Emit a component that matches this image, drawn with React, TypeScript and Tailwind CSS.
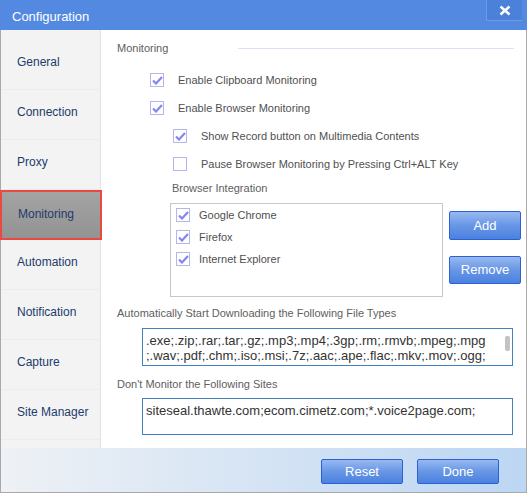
import React from 'react';

const font = { fontFamily: '"Liberation Sans", Arial, sans-serif' };

const Check = ({ checked }: { checked: boolean }) => (
  <span className="w-[14px] h-[14px] shrink-0 border border-[#b6b6ef] bg-white flex items-center justify-center">
    {checked && (
      <svg width="11" height="9" viewBox="0 0 11 9">
        <path d="M1 4.5 L4 7.5 L10 1" stroke="#8585ef" strokeWidth="2.2" fill="none" />
      </svg>
    )}
  </span>
);

const Btn = ({ label, className = '' }: { label: string; className?: string }) => (
  <div
    className={
      'flex items-center justify-center rounded-[2px] border border-[#2d5fd5] bg-linear-to-b from-[#97b9ef] via-[#6896e6] to-[#4a82df] text-white text-[13px] ' +
      className
    }
  >
    {label}
  </div>
);

const navItems = ['General', 'Connection', 'Proxy', 'Monitoring', 'Automation', 'Notification', 'Capture', 'Site Manager'];

const checks = [
  { label: 'Enable Clipboard Monitoring', checked: true, indent: 'pl-[33px]' },
  { label: 'Enable Browser Monitoring', checked: true, indent: 'pl-[33px]' },
  { label: 'Show Record button on Multimedia Contents', checked: true, indent: 'pl-[56px]' },
  { label: 'Pause Browser Monitoring by Pressing Ctrl+ALT Key', checked: false, indent: 'pl-[56px]' },
];

const browsers = ['Google Chrome', 'Firefox', 'Internet Explorer'];

export default function App() {
  return (
    <div style={font} className="w-[527px] h-[493px] flex flex-col bg-white overflow-hidden select-none">
      {/* Title bar */}
      <div className="h-[30px] shrink-0 bg-[#5389e1] flex items-start justify-between">
        <span className="text-white text-[13px] pl-[12px] pt-[7px]">Configuration</span>
        <div className="w-[36px] h-[21px] mr-[5px] bg-[#4c81da] border-l border-b border-[#6f9be6] flex items-center justify-center">
          <svg width="12" height="11" viewBox="0 0 12 11">
            <path d="M1.5 1.5 L10.5 9.5 M10.5 1.5 L1.5 9.5" stroke="#ffffff" strokeWidth="2.4" />
          </svg>
        </div>
      </div>

      <div className="flex-1 flex flex-col border-x border-b border-[#a9a9a9]">
        <div className="h-[418px] flex">
          {/* Sidebar */}
          <div className="w-[100px] shrink-0 bg-[#f3f3f3] border-r border-[#e2e2e2] pt-[10px] flex flex-col">
            {navItems.map((item) => {
              const active = item === 'Monitoring';
              return (
                <div
                  key={item}
                  className={
                    active
                      ? 'h-[50px] -ml-[1px] -mr-[2px] border-2 border-[#e64a41] bg-linear-to-b from-[#a3a3a3] to-[#939393] flex items-center pl-[16px] pb-[3px] text-[12px] text-[#1c3b6c]'
                      : 'h-[50px] border-b border-[#ececec] flex items-center pl-[16px] pb-[5px] text-[12px] text-[#1c3b6c]'
                  }
                >
                  {item}
                </div>
              );
            })}
          </div>

          {/* Content */}
          <div className="flex-1 flex flex-col pl-[16px] text-[11px] text-[#505050]">
            <div className="h-[16px] mt-[10px] flex items-center">
              <span className="w-[121px] shrink-0 text-[#606060]">Monitoring</span>
              <div className="flex-1 h-px bg-[#dcdff2] mr-[12px]" />
            </div>

            <div className="mt-[10px] flex flex-col">
              {checks.map((c) => (
                <div key={c.label} className={'h-[28px] flex items-center gap-[14px] ' + c.indent}>
                  <Check checked={c.checked} />
                  <span>{c.label}</span>
                </div>
              ))}
            </div>

            <div className="h-[16px] mt-[2px] pl-[55px] flex items-center text-[#606060]">Browser Integration</div>

            <div className="mt-[7px] pl-[53px] flex">
              <div className="w-[273px] h-[94px] border border-[#c8c8c8] pl-[5px]">
                {browsers.map((b) => (
                  <div key={b} className="h-[22px] flex items-center gap-[9px]">
                    <Check checked />
                    <span>{b}</span>
                  </div>
                ))}
              </div>
              <div className="ml-[6px] pt-[8px] flex flex-col gap-[16px]">
                <Btn label="Add" className="w-[72px] h-[29px]" />
                <Btn label="Remove" className="w-[72px] h-[28px]" />
              </div>
            </div>

            <div className="h-[16px] mt-[8px] flex items-center text-[#606060]">
              Automatically Start Downloading the Following File Types
            </div>

            <div className="mt-[7px] ml-[25px] w-[371px] h-[38px] border border-[#3f81c2] flex text-[13px] text-[#333333]">
              <div className="flex-1 overflow-hidden pl-[3px] pt-[4px] leading-[15px] whitespace-nowrap">
                <div>.exe;.zip;.rar;.tar;.gz;.mp3;.mp4;.3gp;.rm;.rmvb;.mpeg;.mpg</div>
                <div>;.wav;.pdf;.chm;.iso;.msi;.7z;.aac;.ape;.flac;.mkv;.mov;.ogg;</div>
              </div>
              <div className="w-[9px] shrink-0 pt-[7px] flex justify-center">
                <div className="w-[5px] h-[15px] rounded-[2px] bg-[#c3c3c3]" />
              </div>
            </div>

            <div className="h-[16px] mt-[10px] flex items-center text-[#606060]">Don't Monitor the Following Sites</div>

            <div className="mt-[6px] ml-[25px] w-[371px] h-[37px] border border-[#3f81c2] pl-[3px] pt-[2px] text-[13px] text-[#333333] whitespace-nowrap overflow-hidden">
              siteseal.thawte.com;ecom.cimetz.com;*.voice2page.com;
            </div>
          </div>
        </div>

        {/* Footer */}
        <div className="flex-1 bg-linear-to-r from-[#eef1f5] to-[#bcd6f3] flex justify-end items-start pt-[11px] pr-[27px] gap-[14px]">
          <Btn label="Reset" className="w-[82px] h-[25px]" />
          <Btn label="Done" className="w-[82px] h-[25px]" />
        </div>
      </div>
    </div>
  );
}
